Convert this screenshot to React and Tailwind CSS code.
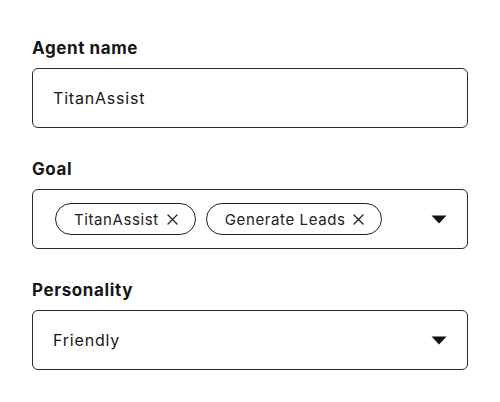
import React from "react";

function Caret() {
  return (
    <svg width="16" height="9" viewBox="0 0 16 9" className="shrink-0">
      <path d="M0.5 0.5 H15.5 L8 8.5 Z" fill="#111" />
    </svg>
  );
}

function XIcon() {
  return (
    <svg width="11" height="11" viewBox="0 0 11 11" className="shrink-0">
      <path d="M1 1 L10 10 M10 1 L1 10" stroke="#222" strokeWidth="1.3" strokeLinecap="round" />
    </svg>
  );
}

function Chip({ label }) {
  return (
    <div className="flex items-center gap-[8px] h-[32px] pl-[18px] pr-[17px] rounded-full border border-[#222] text-[15px] tracking-[0.6px] text-[#222] leading-none">
      <span>{label}</span>
      <XIcon />
    </div>
  );
}

export default function App() {
  return (
    <div
      className="w-[500px] h-[402px] bg-white px-[32px] pt-[36px] text-[#161616]"
      style={{ fontFamily: "Inter, 'Noto Sans', sans-serif" }}
    >
      <div className="flex flex-col gap-[29px]">
        <div className="flex flex-col gap-[8px]">
          <div className="text-[17px] leading-[24px] font-bold tracking-[0.6px]">Agent name</div>
          <div className="h-[60px] flex items-center px-[20px] border border-[#2a2a2a] rounded-[6px] text-[16px] tracking-[0.8px]">
            TitanAssist
          </div>
        </div>
        <div className="flex flex-col gap-[8px]">
          <div className="text-[17px] leading-[24px] font-bold tracking-[0.6px]">Goal</div>
          <div className="h-[60px] flex items-center justify-between pl-[22px] pr-[20px] border border-[#2a2a2a] rounded-[6px]">
            <div className="flex items-center gap-[10px]">
              <Chip label="TitanAssist" />
              <Chip label="Generate Leads" />
            </div>
            <Caret />
          </div>
        </div>
        <div className="flex flex-col gap-[8px]">
          <div className="text-[17px] leading-[24px] font-bold tracking-[0.6px]">Personality</div>
          <div className="h-[60px] flex items-center justify-between pl-[20px] pr-[20px] border border-[#2a2a2a] rounded-[6px] text-[16px] tracking-[0.8px]">
            <span>Friendly</span>
            <Caret />
          </div>
        </div>
      </div>
    </div>
  );
}
